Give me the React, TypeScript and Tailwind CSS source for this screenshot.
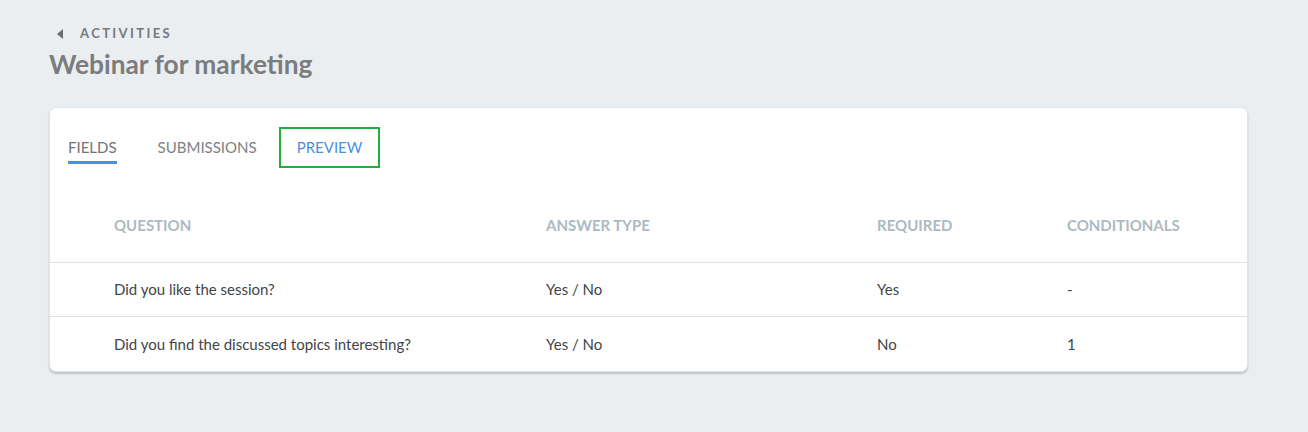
const rows = [
  { question: 'Did you like the session?', type: 'Yes / No', required: 'Yes', conditionals: '-' },
  { question: 'Did you find the discussed topics interesting?', type: 'Yes / No', required: 'No', conditionals: '1' },
]

export default function App() {
  return (
    <div className="min-h-[432px] bg-[#ebeef0] px-[49px] pt-[25px] pb-10" style={{ fontFamily: 'Lato, "Open Sans", sans-serif' }}>
      <div className="flex items-center h-[18px] ml-[8px]">
        <svg width="6" height="10" viewBox="0 0 6 10" className="mr-[17px]">
          <path d="M6 0 L0 5 L6 10 Z" fill="#6b7073" />
        </svg>
        <span className="text-[13px] font-bold tracking-[2.4px] text-[#74797c]">ACTIVITIES</span>
      </div>
      <h1 className="mt-[4px] text-[26.3px] leading-[34px] font-bold text-[#7a7c7d]">Webinar for marketing</h1>

      <div className="mt-[26px] w-[1199px] bg-white rounded-[7px] border border-[#e1e4e6] shadow-[0_2px_2px_rgba(0,0,0,0.18)]">
        <div className="flex items-center h-[41px] mt-[19px] pl-[18px]">
          <div className="relative h-[41px] flex items-center text-[15px] text-[#6f7477]">
            FIELDS
            <span className="absolute left-0 right-0 bottom-[4px] h-[3px] bg-[#4a90e2]" />
          </div>
          <div className="ml-[41px] h-[41px] flex items-center text-[15px] text-[#7d8285]">SUBMISSIONS</div>
          <div className="ml-[22px] h-[41px] flex items-center px-[16px] border-2 border-[#1fb13b] text-[15px] text-[#4a90e2]">
            PREVIEW
          </div>
        </div>

        <div className="grid grid-cols-[432px_331px_190px_1fr] items-center h-[95px] pl-[64px] border-b border-[#dfe2e4] pt-[21px] text-[15px] font-bold text-[#adbac0]">
          <div>QUESTION</div>
          <div>ANSWER TYPE</div>
          <div>REQUIRED</div>
          <div>CONDITIONALS</div>
        </div>

        {rows.map((row, i) => (
          <div
            key={row.question}
            className={`grid grid-cols-[432px_331px_190px_1fr] items-center h-[54px] pl-[64px] text-[15px] text-[#3f4548] ${i < rows.length - 1 ? 'border-b border-[#dfe2e4]' : ''}`}
          >
            <div>{row.question}</div>
            <div>{row.type}</div>
            <div>{row.required}</div>
            <div>{row.conditionals}</div>
          </div>
        ))}
      </div>
    </div>
  )
}
